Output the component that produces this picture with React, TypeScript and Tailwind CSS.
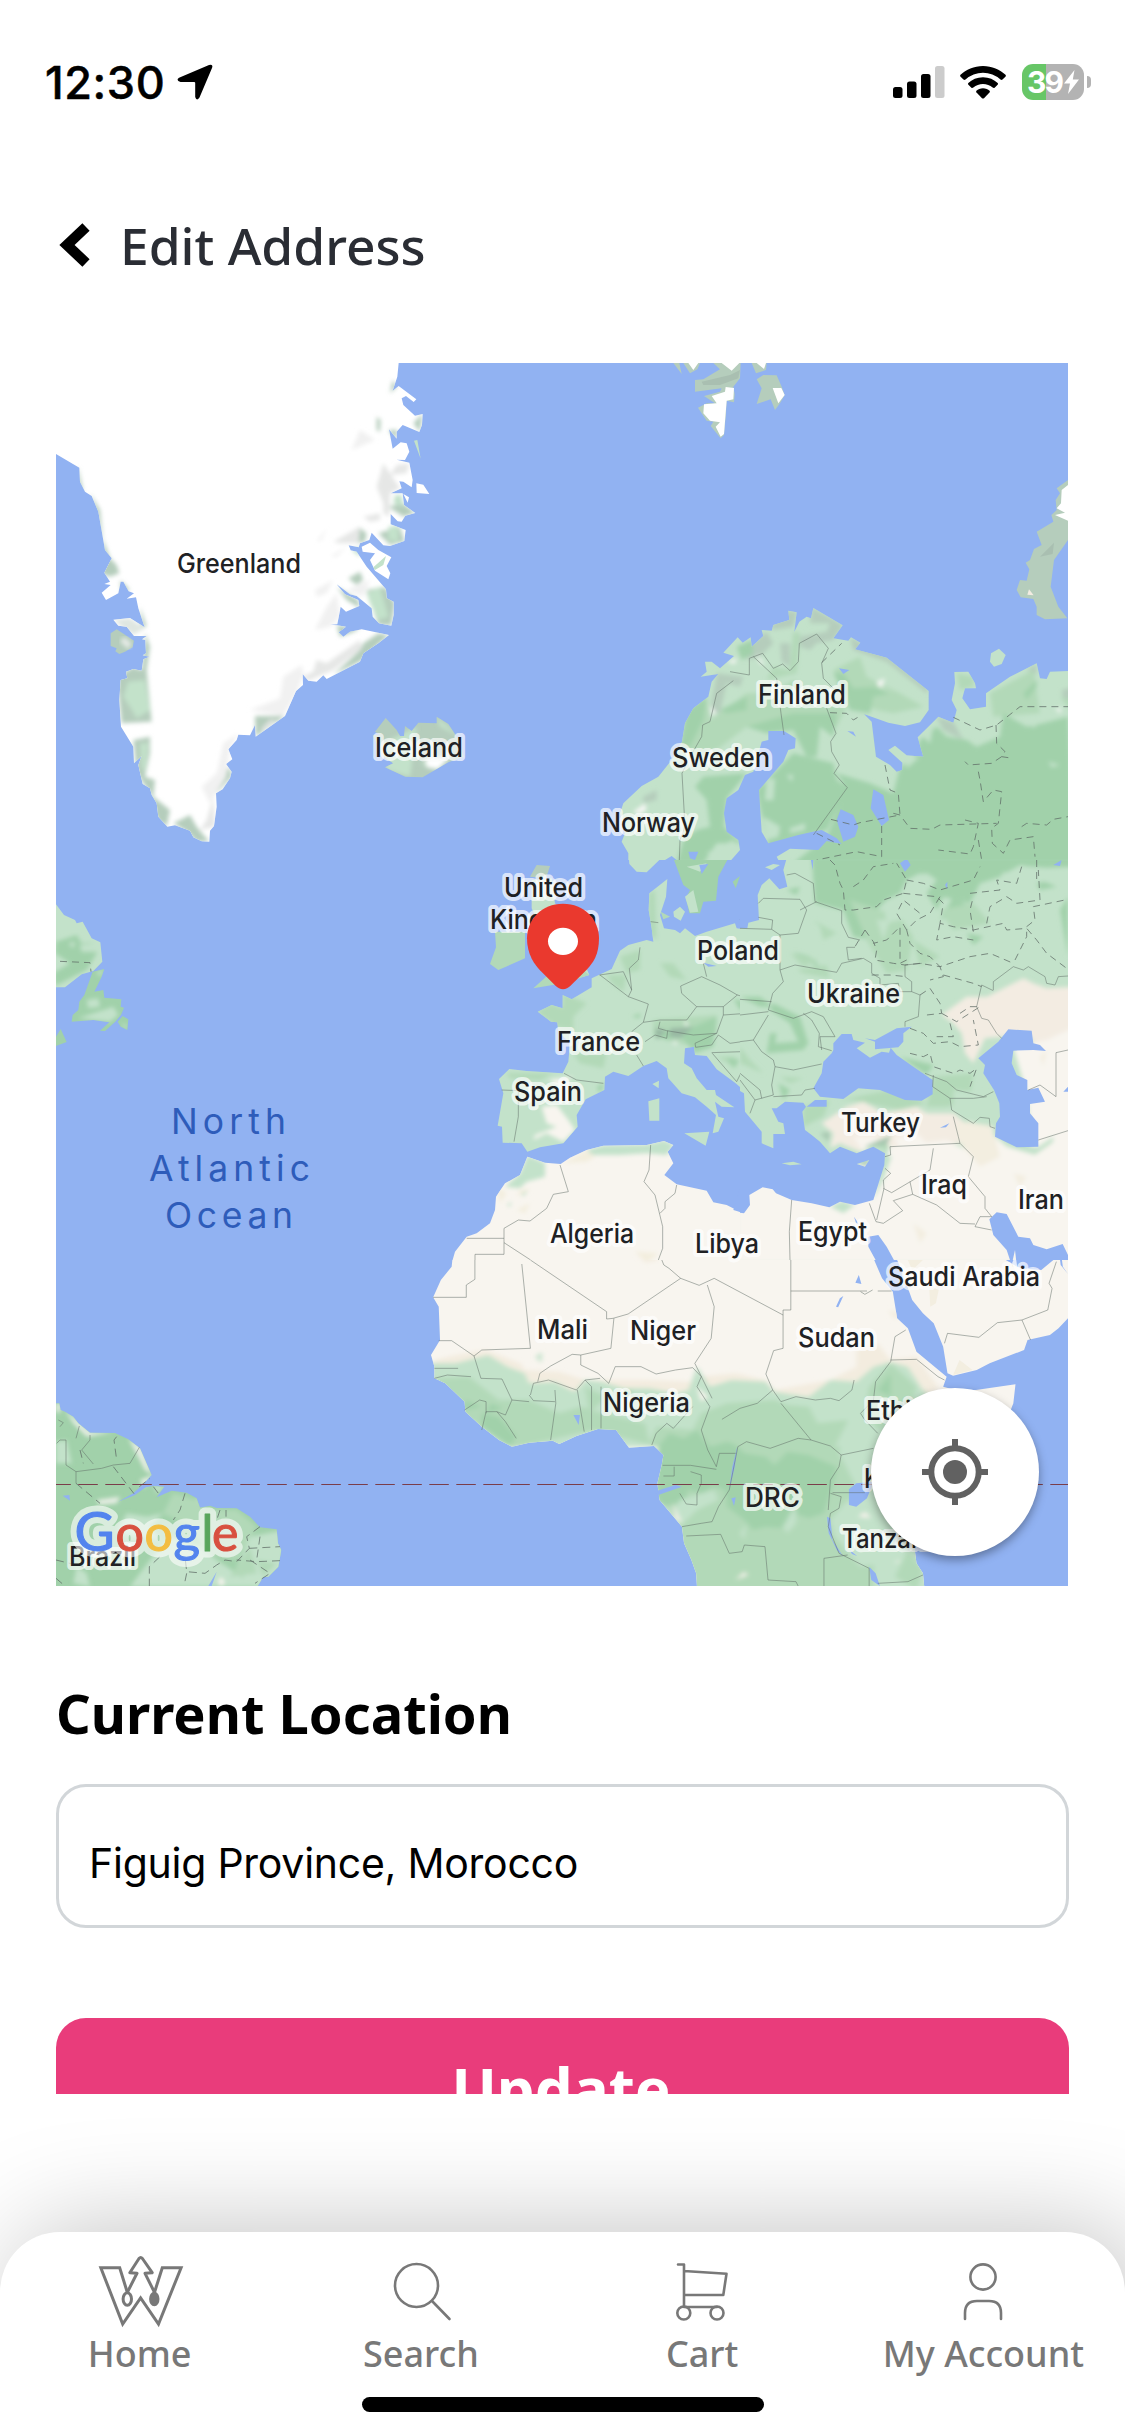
import React from "react";

const WATER = "#91b2f2";
const LIGHT = "#c3e2ca";
const MID = "#b2d9b8";
const DARK = "#a1d1aa";
const TUNDRA = "#b5cdbc";
const SAND = "#f8f5ef";
const TAN = "#f3ece2";

type TileProps = {
  x: number;
  y: number;
  w: number;
  h: number;
  box: string;
  children: React.ReactNode;
};

function Tile({ x, y, w, h, box, children }: TileProps) {
  return (
    <svg x={x} y={y} width={w} height={h} viewBox={box} preserveAspectRatio="none" overflow="hidden">
      {children}
    </svg>
  );
}

/* A land mass whose relief shading is softened and clipped to the coast. */
function Land({ id, d, fill, children }: { id: string; d: string; fill: string; children?: React.ReactNode }) {
  return (
    <g>
      <clipPath id={id}>
        <path d={d} />
      </clipPath>
      <path d={d} fill={fill} />
      <g clipPath={`url(#${id})`}>
        <g filter="url(#relief)">{children}</g>
      </g>
    </g>
  );
}

function Borders({ d, dash }: { d: string; dash?: string }) {
  return (
    <path
      d={d}
      fill="none"
      stroke="#5f6b66"
      strokeOpacity={dash ? 0.75 : 0.5}
      strokeWidth={1}
      strokeDasharray={dash}
      vectorEffect="non-scaling-stroke"
    />
  );
}

function Greenland() {
  return (
    <Tile x={50} y={360} w={510} h={500} box="0 0 1530 1500">
      <Land
        id="greenland"
        fill="#ffffff"
        d="M18 9L1046 9L1042 50L1028 92L1046 78L1099 118L1091 126L1068 108L1055 115L1060 135L1095 167L1118 162L1116 195L1108 216L1058 195L1040 215L1040 236L1017 208L1028 266L1052 247L1070 250L1078 275L1065 300L1040 299L1078 308L1088 360L1085 382L1060 365L1048 364L1055 385L1022 400L1058 400L1062 435L1096 459L1066 467L1055 485L1043 484L1022 462L1022 493L1067 510L1063 543L1020 558L1000 556L965 518L958 540L930 550L926 562L896 556L902 571L920 575L950 620L1008 688L1010 715L1031 725L1031 765L1024 797L987 790L968 770L965 745L920 708L900 703L860 673L885 703L925 720L928 738L888 755L872 740L862 793L838 794L862 796L888 800L866 817L880 830L900 815L935 808L1017 825L985 850L940 880L930 905L830 957L820 946L800 965L775 962L758 942L759 975L738 993L705 1068L617 1130L615 1095L600 1126L565 1124L560 1140L535 1168L547 1198L528 1212L545 1235L540 1255L518 1288L498 1300L500 1340L492 1398L480 1412L478 1445L455 1444L430 1432L420 1412L375 1396L352 1400L325 1370L320 1330L305 1305L300 1285L278 1272L265 1215L275 1188L252 1210L250 1160L213 1100L208 1020L212 960L232 955L228 935L250 927L275 932L280 898L298 890L278 886L288 880L286 840L276 838L290 828L252 828L230 800L205 797L190 779L240 774L284 802L265 745L258 712L230 716L252 700L236 694L220 665L212 665L205 700L168 720L155 698L182 675L163 672L180 665L163 638L185 595L165 570L145 455L125 408L105 395L90 365L88 323L18 282Z"
      >
        <path fill={TUNDRA} d="M85 320L100 400L82 380ZM120 400L150 450L160 560L140 470ZM160 540L180 595L200 615L208 640L180 650L150 640ZM210 660L240 690L215 700ZM270 740L290 800L275 800ZM286 820L300 860L290 930L305 1085L215 1090L200 950L250 920L275 930ZM250 1140L300 1130L300 1180L285 1250L315 1260L310 1310L360 1350L350 1400L320 1380L300 1300L260 1240ZM370 1390L420 1365L440 1400L478 1445L440 1445L410 1415ZM495 1270L540 1220L545 1250L500 1300ZM615 1068L705 1068L617 1130ZM985 820L1017 825L930 905L850 945L930 870L940 850ZM860 680L925 720L930 745L890 720ZM925 500L950 520L945 545L925 550ZM860 795L930 806L900 820L870 830ZM950 690L1005 680L1035 730L1024 797L985 795ZM895 655L930 635L940 660L920 675ZM1090 190L1118 160L1110 216ZM980 170L992 180L990 215L980 210ZM1015 210L1042 210L1038 240ZM1015 440L1060 430L1096 459L1060 470ZM985 520L1050 500L1064 545L1020 555ZM1028 60L1040 80L1020 100Z" />
        <path fill="#dfe6e1" d="M190 779L240 774L284 805L250 825L215 800Z" />
        <path fill={LIGHT} d="M235 965L285 960L300 1050L260 1075L240 1040L220 1010ZM270 1150L295 1150L285 1240L275 1220ZM950 700L990 680L1015 770L985 780L960 730ZM1015 500L1045 495L1045 545L1015 540ZM1035 405L1055 405L1060 440L1030 430ZM970 610L1010 590L1005 600L970 630ZM905 570L930 560L930 590Z" />
        <path fill="#f1f1f1" d="M905 270L930 210L975 240ZM795 690L850 660L830 700L800 710ZM795 810L830 740L860 700L870 770L840 800ZM890 690L960 660L940 710ZM880 770L930 755L935 775L890 790ZM700 950L755 915L760 940L740 1000L700 1068L600 1050L690 1015ZM455 1280L500 1240L520 1150L565 1120L540 1168L528 1250L498 1300L480 1330ZM800 545L830 505L815 540ZM840 590L890 560L860 590Z" />
        <path fill="#e6e7e6" d="M1000 310L1050 385L1020 400L1018 470L1000 460L1000 430L980 380ZM940 470L990 460L990 480L960 485ZM1040 315L1078 310L1070 340L1020 345ZM850 545L930 500L925 550L870 550ZM800 900L830 910L930 840L935 865L850 930L775 962L755 950L790 935ZM490 1310L495 1400L450 1410L470 1380ZM630 1110L660 1080L680 1080L640 1110Z" />
      </Land>
      <path fill={TUNDRA} d="M182 820L200 808L252 842L248 862L225 875L208 882L196 874L200 865L182 858Z" />
      <path fill="#e4e9e5" d="M210 845L222 830L245 850L235 868Z" filter="url(#relief)" />
      <path fill="#ffffff" d="M1099 370L1120 374L1138 402L1100 399ZM1060 402L1077 412L1073 428ZM935 560L960 548L985 570L1024 592L1010 618L1021 640L1015 658L975 632L960 600L975 580L938 575Z" />
      <path fill={LIGHT} d="M1092 242L1102 240L1112 296ZM970 622L1008 588L1000 615L975 630Z" />
      <Land
        id="iceland"
        fill={TUNDRA}
        d="M975 1115L1007 1074L1040 1110L1050 1128L1062 1128L1065 1098L1085 1113L1105 1088L1160 1090L1160 1070L1195 1092L1220 1130L1242 1190L1195 1207L1118 1252L1066 1250L1005 1222L1030 1210L1000 1190L968 1126L990 1124Z"
      >
        <path fill={LIGHT} d="M1160 1070L1230 1130L1170 1100ZM1000 1150L1100 1100L1080 1250L1010 1230ZM1110 1210L1190 1190L1150 1225Z" />
        <path fill="#ffffff" d="M1125 1195L1200 1190L1165 1228L1130 1222Z" />
      </Land>
    </Tile>
  );
}

function Scandinavia() {
  return (
    <Tile x={560} y={360} w={508} h={500} box="0 0 1524 1500">
      <path fill={TUNDRA} d="M340 9L358 9L365 42ZM370 9L420 9L412 28L390 40ZM405 60L430 58L480 28L460 9L542 9L540 55L520 80L524 102L522 127L500 122L498 160L492 225L482 235L452 198L460 185L440 182L414 143L440 130L465 130L432 108L480 95L485 85L405 95ZM575 9L620 9L618 30L588 40ZM590 58L610 45L650 46L665 80L674 105L660 130L645 150L632 118L590 132L605 85Z" />
      <path fill="#a9bfb1" d="M425 65L510 45L540 30L535 55L480 75L430 75Z" />
      <path fill="#ffffff" d="M385 9L415 9L400 30ZM485 9L538 9L515 32ZM590 9L618 9L612 27ZM638 84L664 84L674 105L655 130ZM432 133L470 130L455 108L495 95L497 81L522 84L520 118L500 122L492 222L482 230L467 200L480 187L450 182L430 160Z" />
      <path fill={TUNDRA} d="M1524 360L1490 385L1500 400L1487 420L1490 450L1474 465L1480 485L1430 515L1445 555L1422 567L1410 600L1397 608L1408 628L1400 662L1380 660L1370 690L1382 712L1420 717L1430 740L1430 765L1455 778L1522 775L1495 740L1472 680L1482 600L1524 540Z" />
      <path fill="#a9bfb1" d="M1482 548L1478 582L1440 590Z" />
      <path fill="#ffffff" d="M1524 375L1505 390L1503 430L1490 445L1515 458L1485 465L1524 482Z" />
      <path fill={TAN} d="M1407 688L1421 706L1402 704Z" />
      <path fill={LIGHT} d="M1293 880L1317 866L1337 885L1325 912L1302 920L1290 905Z" />
      <Land
        id="fenno"
        fill={LIGHT}
        d="M205 1510L205 1480L185 1445L195 1420L180 1360L190 1330L245 1278L295 1250L335 1200L366 1145L375 1090L400 1045L445 1010L455 965L475 942L422 950L440 935L435 905L455 905L480 925L522 888L490 878L533 832L548 848L572 832L575 860L610 828L605 810L635 812L640 795L688 780L685 752L710 757L703 815L718 785L740 770L753 775L760 744L848 796L820 835L865 842L873 832L901 848L885 868L980 893L1106 993L1106 1050L1080 1087L1035 1098L985 1088L905 1060L885 1035L935 1085L948 1190L990 1215L1010 1235L1027 1230L1027 1208L985 1170L1005 1157L1040 1186L1090 1190L1073 1132L1105 1100L1135 1070L1180 1088L1190 1050L1175 1020L1185 970L1183 936L1225 935L1245 970L1248 985L1215 985L1207 1015L1230 1048L1278 1040L1278 1000L1350 950L1430 910L1440 955L1460 957L1470 935L1545 932L1545 1510Z"
      >
        <path fill={TUNDRA} d="M755 740L850 796L820 840L770 850L750 870L720 860L720 830L800 815L810 790L750 790ZM570 850L620 815L640 850L600 890L560 900ZM685 752L712 757L700 800L640 810L630 800ZM870 830L905 850L980 885L1106 985L1100 1000L980 905L880 870ZM470 940L550 950L540 980L500 970L480 1060L450 1060ZM1130 1070L1180 1085L1210 1140L1150 1110ZM250 1310L290 1290L290 1320L250 1330ZM1505 990L1545 980L1545 1020L1510 1020ZM660 850L690 850L690 920L665 905ZM1400 930L1430 910L1430 945Z" />
        <path fill={MID} d="M440 1010L450 1080L560 1000L640 1000L700 960L760 1010L860 1040L830 1100L700 1080L560 1100L470 1170L400 1180L360 1150L380 1060ZM820 930L900 890L920 950L1020 1000L1090 1040L1000 1060L950 1050L860 1010ZM1290 1000L1420 930L1440 1060L1300 1070ZM1500 1010L1540 1020L1540 1060ZM1190 940L1240 950L1240 980L1200 990ZM700 815L720 820L710 940L620 960L640 920L690 930Z" />
        <path fill={DARK} d="M380 1050L440 1010L430 1080L390 1160L360 1160ZM530 860L575 840L580 880L545 900ZM430 1250L560 1240L500 1315L492 1400L545 1450L470 1450L430 1510L350 1510L370 1440L410 1410L450 1400L440 1320L405 1280ZM480 1050L560 1010L560 1050L500 1060ZM560 1100L700 1060L830 1060L820 1130L780 1100L770 1190L740 1190L700 1110L620 1120ZM740 1190L820 1210L830 1260L865 1285L800 1410L625 1460L590 1290L700 1180ZM820 940L850 940L880 985L940 980L990 1000L940 1010L930 1060L870 1050L850 1000ZM1080 1140L1130 1100L1160 1130L1220 1140L1250 1160L1320 1130L1330 1060L1400 1100L1450 1090L1524 1070L1545 1510L700 1510L800 1430L860 1285L830 1240L930 1270L1000 1300L1020 1220L1060 1200ZM1390 1000L1430 960L1430 980L1400 1020Z" />
        <path fill={LIGHT} d="M620 1260L645 1255L640 1320L615 1320ZM610 1370L660 1400L655 1430L620 1440ZM690 1405L735 1390L735 1410L690 1420ZM680 1245L700 1245L695 1265ZM440 1480L520 1440L535 1465L480 1500ZM1090 1130L1120 1095L1110 1150ZM1040 1195L1080 1190L1040 1225ZM1465 1205L1500 1215L1475 1222ZM1400 1065L1460 1060L1420 1105Z" />
        <path fill="#f4f6f3" d="M220 1355L255 1330L260 1350L235 1365ZM500 905L530 895L525 912ZM950 965L975 955L965 985L1000 1000L955 978ZM1485 1045L1505 1045L1500 1060ZM590 880L615 915L600 910ZM450 1035L470 1060L455 1065Z" />
      </Land>
      <path fill={WATER} d="M625 1113L672 1113L707 1135L705 1165L685 1170L670 1205L597 1290L605 1415L625 1450L715 1425L765 1414L785 1410L830 1435L845 1452L800 1443L775 1470L690 1466L650 1490L660 1510L505 1510L540 1470L535 1440L500 1415L492 1360L500 1315L535 1290L555 1245L580 1235L590 1200L605 1145L625 1140ZM830 1380L842 1348L880 1365L895 1400L885 1430L850 1445ZM932 1345L940 1288L970 1305L987 1380L965 1398ZM385 1475L415 1475L405 1500L390 1495ZM837 925L868 930L850 942ZM862 1113L880 1115L888 1130ZM315 1500L335 1488L350 1500Z" />
      <Borders d="M358 1500L360 1440L375 1400L366 1240L385 1200L425 1130L428 1095L450 1085L470 1000L520 962M510 935L568 945L568 895L608 880L640 925L668 912L690 932L715 905L718 850L770 822L805 865L785 910L790 955L820 985M580 890L650 955L663 1060L672 1125M800 1045L828 1120L812 1145L815 1175L838 1215L822 1240L862 1283L760 1425" />
      <Borders dash="7 5" d="M810 1058L860 1060L880 1080L905 1065M785 908L845 850M1180 1072L1260 1110L1310 1095L1380 1040L1524 1040M1308 1095L1310 1150L1335 1175L1325 1190L1345 1193M1325 1190L1295 1210L1225 1215L1215 1205M1255 1235L1260 1260L1270 1325L1300 1290L1325 1295L1315 1390L1295 1405L1297 1450L1330 1480L1350 1440L1420 1430L1425 1490M1000 1360L1020 1365L1050 1405L1115 1408L1140 1395L1310 1390M975 1215L990 1290L1015 1300L1020 1365L900 1388L880 1395L800 1375M965 1398L965 1490L890 1475L770 1500M1215 1380L1255 1390L1240 1460L1230 1482L1135 1470M1385 1400L1400 1390L1460 1395L1480 1378L1524 1370M770 1420L840 1455M1255 1440L1265 1500" />
    </Tile>
  );
}

function Atlantic() {
  return (
    <Tile x={50} y={860} w={390} h={400} box="0 0 1170 1200">
      <Land id="labrador" fill={LIGHT} d="M18 133L42 165L75 180L80 190L98 185L125 235L151 247L157 305L130 333L95 343L45 382L18 382Z">
        <path fill={DARK} d="M18 245L80 225L95 250L130 250L140 280L110 330L50 360L15 378L10 340L60 310L15 280Z" />
        <path fill={LIGHT} d="M55 250L75 245L70 265ZM90 255L145 250L140 275L95 275Z" />
      </Land>
      <Land id="newfoundland" fill={DARK} d="M163 327L155 350L133 395L160 390L163 413L214 418L212 440L222 443L213 465L196 485L165 513L150 512L178 487L130 480L65 485L68 465L85 450L88 425L103 405L128 335ZM203 485L218 468L235 478L232 510L212 500ZM32 507L50 546L18 558L18 530Z">
        <path fill={LIGHT} d="M110 420L145 415L150 440L115 445ZM85 475L130 460L190 440L205 465L180 485ZM140 335L160 330L150 350ZM213 490L230 495L230 510Z" />
      </Land>
      <Borders dash="7 5" d="M30 304L120 308L123 335" />
    </Tile>
  );
}

function WestEurope() {
  return (
    <Tile x={440} y={860} w={300} h={400} box="0 0 900 1200">
      <path fill={DARK} d="M702 0L862 0L835 50L828 122L790 125L780 160L748 160L738 115L750 90L730 75ZM878 65L900 48L887 85Z" />
      <path fill={LIGHT} d="M567 0L658 0L620 37L590 35L568 12ZM700 155L720 140L735 155L722 182L702 170ZM735 110L760 90L775 155L750 158ZM740 20L800 10L780 35Z" />
      <path fill={WATER} d="M778 15L805 12L785 42Z" />
      <path fill={MID} d="M165 215L255 215L255 295L175 330L150 312L168 262ZM662 155L690 170L670 178Z" />
      <path fill={TUNDRA} d="M270 50L290 15L330 18L318 55Z" />
      <path fill={LIGHT} d="M275 60L335 55L345 130L400 180L425 290L448 345L360 370L322 350L300 200L275 145Z" />
      <path fill={MID} d="M280 385L330 340L430 330L448 345L370 370Z" />
      <Land
        id="europe"
        fill={LIGHT}
        d="M628 100L682 57L678 110L660 165L672 205L705 210L720 220L735 205L765 228L800 215L885 190L890 205L910 207L910 690L885 668L830 628L800 588L765 585L762 560L735 565L732 610L755 625L770 655L800 690L825 690L828 705L883 742L845 740L825 725L835 770L852 775L835 815L818 820L828 765L800 740L765 712L725 700L685 655L680 625L650 603L610 618L565 648L520 635L495 650L493 690L437 718L410 765L413 800L370 850L300 862L262 875L245 850L188 848L186 800L173 797L190 700L177 657L208 627L260 633L368 640L385 605L390 550L355 515L352 487L333 485L293 455L335 435L368 445L368 405L395 418L455 382L455 355L515 327L540 272L565 255L620 240L640 245L635 205L626 150Z"
      >
        <path fill={MID} d="M290 455L335 430L368 445L368 400L440 430L400 470L400 510L350 500ZM540 290L600 270L600 330L560 340ZM625 100L645 90L650 240L625 220ZM400 580L500 580L490 625L420 610ZM640 480L830 465L830 520L760 560L640 530ZM830 590L885 590L890 625ZM200 640L340 640L300 660L210 655ZM660 310L700 310L740 360L690 350ZM500 345L560 345L550 395L520 375Z" />
        <path fill={DARK} d="M760 500L830 470L820 560L765 580L720 525L680 540L640 520ZM880 415L950 440L900 450ZM470 680L495 670L480 700ZM575 470L600 460L600 475ZM860 595L900 600L880 625Z" />
        <path fill="#98b8a3" d="M690 505L760 500L720 535L690 530ZM645 505L680 510L650 540Z" />
        <path fill={SAND} d="M305 740L350 735L385 780L405 810L370 845L320 820L280 840L285 825L350 800L320 790ZM325 660L400 650L360 680Z" />
        <path fill="#f4f6f3" d="M730 482L745 490L740 500ZM697 545L715 545L705 555Z" />
      </Land>
      <path fill={LIGHT} d="M733 820L808 815L797 857ZM625 724L658 715L658 782L628 782ZM637 672L657 662L656 685Z" />
      <Land
        id="maghreb"
        fill={SAND}
        d="M35 1210L45 1175L80 1130L110 1120L150 1090L165 1050L168 1010L195 970L240 945L262 890L315 908L362 912L390 893L440 870L490 857L620 855L672 843L700 855L683 875L700 910L673 945L710 973L800 992L820 1027L860 1035L910 1060L910 1210Z"
      >
        <path fill={LIGHT} d="M262 885L315 908L315 950L260 965L240 985L195 980L240 940ZM440 870L490 855L620 853L672 840L705 855L680 885L620 880L540 885L450 885ZM240 995L265 990L250 1010ZM200 1035L215 1025L210 1040Z" />
        <path fill="#f3eede" d="M370 910L440 870L465 890L440 905ZM240 990L275 985L230 1010ZM230 1050L270 1030L255 1060ZM585 1175L655 1180L620 1210ZM170 980L200 1000L180 1030Z" />
      </Land>
      <path fill={WATER} d="M900 980L960 980L925 1005L930 1035L912 1060L880 1050L893 1010Z" />
      <path fill={WATER} d="M790 308L830 318L805 320Z" />
      <Borders d="M478 345L550 335L575 390L565 410L480 345M565 410L625 432L610 487L575 515M610 487L660 480L740 480L770 440L725 400L722 378L785 350L840 375L892 405L850 440L770 440M660 485L655 505L680 512L760 525L830 520L850 465L850 440M850 465L990 455M615 545L645 525L680 535L683 512M590 585L610 618M372 640L410 660L490 670M830 520L765 550L767 562L815 555L835 525L870 550L905 545M815 578L905 575L910 625L890 665L817 580M185 690L235 692L235 770L222 845M600 262L595 300L568 325L575 390M790 310L800 350M632 185L655 188M360 915L385 995L340 1003L320 1045L270 1083L235 1080L192 1105L192 1183L105 1183L105 1200M80 1135L192 1135M192 1148L272 1200M632 855L627 930L612 965L645 1005L668 1100L668 1165L655 1200M710 975L705 1000L675 1025L675 1045L660 1060M892 405L910 410M905 545L910 575M950 120L900 180" />
    </Tile>
  );
}

function EastEurope() {
  return (
    <Tile x={740} y={860} w={328} h={400} box="0 0 984 1200">
      <Land id="east" fill={LIGHT} d="M-10 -10H1010V1210H-10Z">
        <path fill={DARK} d="M215 -10L1010 -10L1010 20L900 25L840 15L780 50L720 70L690 130L610 110L590 150L560 100L590 60L540 40L500 60L480 100L440 120L410 150L400 240L340 230L310 150L225 130ZM960 150L984 110L984 290ZM640 110L690 140L600 180ZM100 430L180 470L205 550L190 570L80 580L90 520L110 520L105 550L175 545L150 490L90 450ZM0 410L60 410L100 440L60 440ZM115 670L150 690L130 720ZM880 50L950 80L900 90ZM160 275L210 290L250 330L215 310ZM480 590L580 615L560 645ZM140 90L180 80L170 105ZM680 220L730 230L700 255Z" />
        <path fill={MID} d="M330 120L480 170L520 230L500 330L440 340L410 290L380 240ZM520 240L600 290L540 320ZM600 150L700 130L750 190L640 210ZM170 330L260 315L270 355L190 340ZM220 180L290 220L250 240L240 200ZM190 320L150 280L235 300ZM0 560L30 600L70 640L0 610ZM580 650L700 640L690 720L620 740L560 740ZM300 720L450 690L560 730L480 750L340 720ZM120 650L190 655L150 670ZM190 740L270 720L250 770L190 800ZM390 850L450 830L440 870ZM840 850L890 880L850 880Z" />
        <path fill={LIGHT} d="M785 40L880 20L980 30L970 60L880 70L790 60ZM520 50L560 40L590 60L550 100L510 90ZM430 130L500 120L520 170L440 190ZM140 45L210 50L200 80ZM410 180L450 180L430 240Z" />
        <path fill={TAN} d="M605 465L680 410L740 410L850 355L880 370L920 385L1005 380L1005 900L870 900L880 540L790 530L735 535L700 610L675 580L665 520L640 490ZM245 790L320 740L370 725L430 760L530 740L560 760L640 760L690 800L760 800L760 850L620 850L450 860L420 840L360 875L300 850L270 865L280 820Z" />
        <path fill={SAND} d="M-10 960L435 905L450 860L620 840L700 880L770 830L840 870L885 885L940 850L1005 800L1005 1210L-10 1210ZM820 560L920 540L1005 500L1005 830L880 870L860 700ZM460 835L530 820L560 850L480 860ZM340 830L420 830L370 875Z" />
        <path fill="#f3eee0" d="M650 790L740 780L765 830L780 890L720 920L660 850ZM520 1090L560 1120L540 1150ZM820 940L860 950L840 980ZM900 590L920 570L910 620Z" />
        <path fill={LIGHT} d="M640 690L740 700L775 740L770 800L700 790L640 760ZM430 880L455 890L430 960L400 1020ZM270 1040L305 1022L345 1035L310 1060ZM765 830L830 860L895 860L940 830L940 845L885 885L800 860ZM60 810L110 820L100 868L65 850Z" />
        <path fill="#a8c8b1" d="M240 820L270 815L265 845ZM370 860L455 825L440 855ZM355 912L388 900L380 920Z" />
      </Land>
      <path fill={WATER} d="M-5 -5L140 -5L130 30L142 80L118 88L88 55L65 75L53 105L57 180L25 188L22 205L-5 205ZM212 -5L220 -5L218 30ZM480 10L500 -5L512 15L495 35ZM615 75L622 65L622 88ZM940 15L965 0L960 18Z" />
      <path fill={LIGHT} d="M75 22L100 12L120 15L95 30Z" />
      <path
        fill={WATER}
        fillRule="evenodd"
        d="M-5 690L12 700L15 755L65 815L65 850L100 865L100 822L135 822L130 790L115 785L95 745L110 745L135 725L190 728L198 740L187 755L195 810L215 825L240 845L270 880L300 860L350 880L400 860L435 880L433 915L400 1020L345 1035L300 1025L268 1042L215 1030L155 1020L108 1000L98 988L68 982L28 1005L30 1035L12 1060L-5 1057ZM125 910L160 905L185 913L150 916ZM350 912L388 900L375 920ZM200 740L225 720L260 720L260 740Z"
      />
      <path fill={WATER} d="M280 570L280 550L305 522L335 522L340 540L375 548L350 565L390 593L425 575L447 578L452 563L470 585L520 620L578 660L578 703L545 722L495 720L420 690L355 685L310 717L240 710L220 685L245 640L250 605L275 580ZM405 545L375 535L405 540L470 505L515 500L490 520L490 545L475 562L405 568ZM600 803L628 790L618 802ZM805 508L875 512L880 550L900 555L918 573L880 570L820 572L815 610L830 645L862 660L862 690L895 683L915 725L870 732L870 760L895 790L895 860L830 862L765 830L768 790L780 770L778 730L762 690L730 640L735 615L715 595L775 545ZM970 695L984 680L984 695ZM385 1130L415 1125L440 1160L470 1215L415 1215L385 1160ZM342 1070L355 1090L350 1095ZM748 1078L770 1057L800 1062L835 1130L870 1135L880 1155L920 1168L968 1152L984 1185L984 1215L830 1215L825 1170L815 1215L800 1170L760 1125Z" />
      <Borders d="M55 130L70 115L180 118L200 150L175 220L120 225M140 45L165 40L220 70L225 125L305 152L305 190L325 232L360 240M180 150L230 125M0 205L95 208L98 180L55 172M95 208L120 225L120 330L165 315L290 337L305 310L370 295L395 310L395 340L420 355L420 375L475 370M120 330L130 365L98 400L85 450L160 475L215 455L250 470L285 530L240 530L245 570M190 460L215 480L238 520L235 560L275 572M0 418L95 425M0 465L85 455M0 545L40 540L85 465M40 540L65 575L100 600L105 620L160 630L245 612M105 620L95 675L100 705L45 720L0 660M100 710L185 705L195 690L225 685M45 720L30 760M475 370L480 395L515 395L540 405L535 470L495 485L495 500M515 395L515 365L495 350L495 315L545 310M320 262L325 300L365 295M320 262L345 262M760 390L760 365L820 320L850 330L865 320L915 350L920 370L945 375L955 350L984 348M725 375L760 392M725 375L710 440L725 475L745 480L770 520L785 535M948 710V578L984 570M948 710L900 675L865 690M895 840L984 812M555 640L620 665L650 690L730 710L760 695M580 645L578 680L630 715L700 715L740 710M630 715L635 750L700 790L720 772L748 775L750 800L765 805M640 770L655 830L660 850L450 860L452 885L435 890M660 850L700 890L685 950L735 1010L735 1045L755 1070L720 1070L705 1100L755 1110M580 865L570 930L455 998L430 985M510 965L518 1003L460 1022L488 1052L430 1090L408 1085L388 1030M518 1003L590 1035L660 1090L705 1092M432 985L430 960L452 940L435 925M410 1080L432 985M155 1020L148 1115L150 1200M0 640L60 690L65 715" />
      <Borders dash="7 5" d="M270 0L285 15L300 70L310 90L315 150L340 150L410 140L430 120L490 100L500 60L470 10M340 80L370 60L400 20L460 10M490 100L590 110L610 130L600 190L640 200L700 210L790 190L800 210L860 205L890 240L920 280L980 325M600 110L570 160L530 180L500 210L510 250L540 280L570 290L600 320L690 290L750 280L820 310M500 210L470 160L490 120L540 160M500 60L550 70L600 90L700 60L720 20M690 100L780 90L770 60L830 70L845 20M740 190L750 140L800 110L830 130L900 120L895 30M825 300L860 230L860 200L885 180L880 140L984 118M375 210L345 260M375 210L400 245L410 270L405 300L460 310L495 315L540 310L600 320L610 350L570 360M395 345L450 345L500 350M540 405L570 385L600 430L605 460L560 465M610 345L700 370L725 380M605 460L650 485L720 440L690 440L660 460M630 490L640 530L590 530M510 505L550 520L580 550L630 545L660 560L715 555L700 480M510 580L550 590L570 580L580 620L640 640L660 630L690 640L710 625L690 680M500 300L480 310L480 200L440 240L400 250M600 190L590 240L640 230L700 240M700 215L690 150L700 110M890 0V60" />
    </Tile>
  );
}

function Africa() {
  return (
    <Tile x={400} y={1260} w={668} h={326} box="0 180 1552 978">
      <path fill={SAND} d="M1110 100L1145 150L1165 210L1190 300L1215 340L1240 370L1262 440L1272 520L1285 527L1340 510L1370 490L1450 450L1458 420L1510 405L1530 385L1552 355L1552 222L1535 195L1532 165L1490 210L1440 205L1405 178L1405 100ZM1552 222L1540 200L1538 180L1552 180Z" />
      <path fill="#f3eee0" d="M1285 525L1300 480L1330 510ZM1180 180L1215 180L1190 210ZM1230 270L1255 250L1245 310L1232 320Z" />
      <path fill="#ffffff" fillOpacity={0.75} d="M1422 190L1430 165L1434 200L1450 205L1430 215Z" />
      <Land
        id="africa"
        fill={SAND}
        d="M122 175L120 200L95 240L77 292L90 320L93 420L72 465L80 500L80 535L105 550L150 605L152 635L190 680L230 720L260 740L300 728L355 722L370 732L410 708L460 687L502 690L532 743L590 738L612 765L608 795L598 850L603 900L655 980L660 1030L677 1080L688 1120L690 1160L1218 1160L1215 1120L1200 1090L1195 1040L1300 900L1380 760L1425 610L1430 553L1338 570L1290 570L1262 560L1270 530L1200 455L1180 385L1155 355L1145 275L1120 235L1100 175Z"
      >
        <path fill="#f3ecdf" d="M80 480L130 465L200 450L280 490L290 510L370 515L430 540L480 540L560 540L690 545L700 530L780 520L850 540L870 570L1000 540L1060 500L1060 450L1110 430L1140 480L1200 470L1250 560L1220 600L900 620L500 590L80 520ZM1135 330L1165 340L1150 360ZM545 155L600 160L600 180L570 188Z" />
        <path fill={LIGHT} d="M70 490L130 490L205 465L250 500L290 520L300 550L360 545L405 575L430 540L470 545L520 565L580 565L640 580L670 570L690 500L720 560L770 540L850 545L870 575L950 590L1000 540L1060 545L1100 500L1140 485L1180 500L1215 570L1440 800L1440 1170L600 1170L600 740L60 740ZM315 470L330 455L328 490Z" />
        <path fill={SAND} d="M690 560L715 590L700 605Z" />
        <path fill={MID} d="M80 535L160 530L230 600L300 600L370 640L420 620L470 640L600 680L680 690L700 640L760 610L870 600L900 615L950 620L970 670L1040 660L1020 760L1060 860L1040 960L1100 1010L1100 1170L680 1170L640 960L590 850L600 740L450 690L260 745L140 640ZM1090 560L1140 490L1200 560L1180 640L1110 690L1080 640ZM1180 1050L1215 1110L1200 1170L1150 1130ZM430 560L480 590L440 640Z" />
        <path fill={DARK} d="M600 740L625 700L660 715L690 690L720 740L760 725L780 735L800 760L850 770L870 795L900 755L950 765L1015 800L1005 860L985 940L950 955L915 940L885 985L850 980L820 990L800 960L760 920L755 870L730 860L700 880L670 870L660 905L620 920L590 900ZM190 640L230 650L270 710L255 740L190 680ZM1110 570L1140 520L1140 590ZM210 610L240 625L200 640ZM500 580L540 570L520 600ZM150 600L190 620L150 630Z" />
        <path fill={LIGHT} d="M650 900L730 870L740 900L690 930L650 980L640 920ZM790 1000L805 970L800 1020ZM880 1030L890 1010ZM920 910L890 980L900 1000L920 970ZM570 670L600 670L580 730ZM1040 900L1100 900L1160 1080L1070 1100L1010 1010L1000 960ZM1100 1100L1160 1080L1150 1130ZM1050 640L1110 690L1060 740L1010 740Z" />
        <path fill="#f6f2ec" d="M1065 950L1080 935L1095 955ZM780 1140L800 1115L808 1125ZM632 905L655 970L640 960ZM1150 1085L1165 1080L1155 1090Z" />
      </Land>
      <path fill={WATER} d="M1058 248L1066 225L1072 252ZM1013 320L1022 295L1030 288L1018 322ZM403 645L418 645L415 675ZM784 738L778 800L765 870L772 800ZM770 895L780 892L776 918ZM590 875L640 855L655 860L600 885ZM1043 868L1060 850L1100 845L1085 895L1060 920L1043 915ZM992 950L1000 955L1005 1020L1030 1070L1015 1050L996 1000ZM1090 1100L1105 1120L1115 1158L1095 1140ZM1045 1050L1062 1068L1050 1062Z" />
      <Borders d="M174 180V238L154 255V292H77M283 192L303 445L190 450L172 468M303 180L480 335V357L495 355L530 342L652 235L625 205L613 195L602 160M652 235L695 256L730 235L890 345M714 255L730 320L723 415L685 490L725 595M497 355L490 445L420 465L400 463L350 498L325 520L320 545M908 180V330H890V445L868 452L850 522L866 570L830 610L790 625L748 658M908 273H1085M1098 270L1080 283L1070 275M1110 273H1142M90 422L120 422L172 468L188 535L237 537L260 600L300 605M420 465V495L460 520L485 550L500 500L560 500L595 522L640 510L680 503L700 530L690 560M303 585L310 550L345 540L410 570L430 540L465 535M360 570L362 610L350 720M300 585L310 602L360 605M412 570L428 695M445 560V690M467 560V685M430 540L445 560M585 735L595 700L620 670L635 685L680 620M690 560L720 620L700 690L715 750L735 800L742 760L780 760M610 796H675L735 808M612 828H637V800M675 815L700 825L700 850L690 880V915L665 912L650 880M866 570L885 605L920 590L965 600L1000 595L1020 602L1050 570L1055 540M885 610L955 720L925 715L860 745L805 725L785 740L765 870L740 920L725 965L700 970L655 980M955 720L1000 738L1025 765L1020 800L1000 840L995 930M1025 765L1100 745M1140 485L1150 410L1175 390M1140 480L1200 478L1250 530L1265 540M1140 485L1105 545L1100 600L1070 640L1080 660L1110 700M1005 878L1080 878M1000 880L1025 890L1020 925L1000 940L995 980L1020 1060L1090 1105V1158M665 1008L745 1003L765 1060L795 1055L800 1035L848 1040L855 1140L920 1145L925 1158M985 1158V1075L1040 1065M1110 1150L1180 1145L1215 1125M1265 430L1272 400L1345 412L1388 368L1445 360L1505 330L1515 265L1508 250L1525 185M1445 360L1465 420M80 505H135M80 535L110 525L165 530M190 690L200 635L225 635L245 665L270 715M150 630L185 600L200 605V640M225 635L245 645L260 600" />
    </Tile>
  );
}

function Brazil() {
  return (
    <Tile x={50} y={1360} w={350} h={226} box="0 0 1050 678">
      <Land
        id="brazil"
        fill={DARK}
        d="M18 130L28 130L32 150L45 155L70 170L85 190L120 218L195 219L235 238L270 265L305 345L268 385L310 378L343 380L320 412L365 392L410 398L440 415L450 443L480 437L500 444L560 445L600 470L630 502L680 508L684 550L694 570L685 620L655 650L640 650L622 680L18 680Z"
      >
        <path fill="#e8eee5" d="M45 150L80 180L120 215L190 216L110 230L70 190ZM235 235L275 262L306 345L285 330ZM18 128L32 130L30 160L18 155ZM270 360L310 345L280 385ZM440 410L455 440L445 450ZM140 420L210 410L200 430L150 435Z" />
        <path fill={LIGHT} d="M18 245L50 240L65 310L18 310ZM310 375L345 380L320 400ZM350 440L410 420L400 450L360 450ZM300 600L360 530L450 560L500 600L560 640L620 680L240 680L270 640ZM600 530L700 510L700 680L600 680L560 620ZM80 620L110 640L120 680L70 670ZM230 460L290 470L340 460L300 500L330 540L200 520Z" />
        <path fill={MID} d="M370 400L440 420L470 450L560 450L620 500L560 600L470 580L420 500L340 460ZM620 600L680 610L640 650ZM540 650L600 560L620 640Z" />
        <path fill={SAND} d="M505 660L515 652L525 670L510 680Z" />
      </Land>
      <path fill={WATER} d="M205 425L255 405L300 373L280 372L250 400ZM38 407L58 405L60 422ZM475 678L500 635L485 678Z" />
      <Borders d="M25 180L40 188L30 200M88 198L78 235M120 225V240L95 270L130 312M20 250L30 240H48V315L78 335L155 325L190 315L240 310L268 262M78 335V370" />
      <Borders dash="8 5" d="M78 370L150 430M190 320L255 405M200 230L192 240L200 300M90 270L100 310M310 380L325 400M405 400L390 450L370 480M510 450L500 480M528 450V470M630 500L590 530L598 565L560 605L525 600L500 615L465 640L410 635L405 590M410 640L402 678M598 565L690 560M690 602L620 605L560 600M600 600L660 640L615 670M298 680V620L330 590M18 600L100 620M630 530L620 600M18 655L45 678M268 380L300 355" />
    </Tile>
  );
}

const LABELS: [string, number, number, number][] = [
  ["Greenland", 177, 301, 573],
  ["Iceland", 375, 463, 757],
  ["Finland", 758, 846, 704],
  ["Sweden", 672, 770, 767],
  ["Norway", 602, 695, 832],
  ["United", 504, 583, 897],
  ["Kingdom", 490, 597, 929],
  ["Poland", 697, 779, 960],
  ["Ukraine", 807, 900, 1003],
  ["France", 557, 640, 1051],
  ["Spain", 514, 582, 1101],
  ["Turkey", 841, 920, 1132],
  ["Iraq", 921, 967, 1194],
  ["Iran", 1018, 1064, 1209],
  ["Algeria", 550, 634, 1243],
  ["Libya", 695, 759, 1253],
  ["Egypt", 798, 867, 1241],
  ["Saudi Arabia", 888, 1040, 1286],
  ["Mali", 537, 588, 1339],
  ["Niger", 630, 696, 1340],
  ["Sudan", 798, 875, 1347],
  ["Nigeria", 603, 690, 1412],
  ["Ethiopia", 866, 963, 1420],
  ["Kenya", 864, 934, 1488],
  ["DRC", 745, 800, 1507],
  ["Tanzania", 842, 945, 1548],
  ["Brazil", 69, 136, 1566],
];

const OCEAN: [string, number, number, number][] = [
  ["North", 171, 282, 1134],
  ["Atlantic", 149, 306, 1181],
  ["Ocean", 165, 289, 1228],
];

const LOGO: [string, number, string, number][] = [
  ["G", 74.5, "#5384ee", 55],
  ["o", 115.6, "#d8503f", 50],
  ["o", 144.4, "#f3bd42", 50],
  ["g", 173.4, "#5384ee", 51],
  ["l", 201.6, "#58a55c", 50],
  ["e", 212, "#d8503f", 50],
];

function MapView() {
  return (
    <div className="relative h-[1223px] w-[1012px] overflow-hidden">
      <svg className="block h-full w-full" viewBox="56 363 1012 1223">
        <defs>
          <filter id="relief" x="-5%" y="-5%" width="110%" height="110%">
            <feGaussianBlur stdDeviation="6" />
          </filter>
        </defs>
        <rect x={56} y={363} width={1012} height={1223} fill={WATER} />
        <Greenland />
        <Scandinavia />
        <Atlantic />
        <WestEurope />
        <EastEurope />
        <Africa />
        <Brazil />
        <path d="M51.3 1484.5H1068" stroke="#7a3d4a" strokeWidth={1.2} strokeDasharray="19.5 7.5" />
        <g
          className="font-['Inter','Liberation_Sans',sans-serif] text-[26.5px] font-medium"
          fill="#202124"
          stroke="#ffffff"
          strokeOpacity={0.68}
          strokeWidth={8}
          strokeLinejoin="round"
          paintOrder="stroke"
        >
          {LABELS.map(([name, left, right, y]) => (
            <text key={name} x={left} y={y} textLength={right - left} lengthAdjust="spacingAndGlyphs">
              {name}
            </text>
          ))}
        </g>
        <g className="font-['Inter','Liberation_Sans',sans-serif] text-[35.5px]" fill="#2e5cba">
          {OCEAN.map(([name, left, right, y]) => (
            <text key={name} x={left} y={y} textLength={right - left + 4} lengthAdjust="spacing">
              {name}
            </text>
          ))}
        </g>
        <g className="font-['Lato',sans-serif]" strokeLinejoin="round">
          <g fill="none" stroke="#ffffff" strokeWidth={13} opacity={0.6}>
            {LOGO.map(([c, x, , size], i) => (
              <text key={i} x={x} y={1550.5} fontSize={size}>
                {c}
              </text>
            ))}
          </g>
          {LOGO.map(([c, x, color, size], i) => (
            <text key={i} x={x} y={1550.5} fontSize={size} fill={color} stroke={color} strokeWidth={1.1}>
              {c}
            </text>
          ))}
        </g>
        <g transform="translate(440 860) scale(.33333)">
          <path
            d="M369 131C305 131 261 178 261 235C261 285 285 315 300 331L345 376Q369 400 393 376L440 329C460 309 477 283 477 235C477 178 433 131 369 131Z"
            fill="#ea392e"
          />
          <ellipse cx={369} cy={244} rx={45} ry={41} fill="#fff" />
        </g>
      </svg>
      <button className="absolute top-[1025px] left-[815px] flex size-[168px] items-center justify-center rounded-full bg-white shadow-[0_4px_10px_rgba(0,0,0,0.35)]">
        <svg className="size-[66px]" viewBox="-33 -33 66 66" fill="none" stroke="#616161" strokeWidth={6}>
          <circle r={23.7} />
          <circle r={12} fill="#616161" stroke="none" />
          <path d="M0 -33V-23M0 33V23M-33 0H-23M33 0H23" />
        </svg>
      </button>
    </div>
  );
}

function StatusBar() {
  return (
    <header className="flex h-[164px] items-center justify-between pr-[34px] pl-[45px]">
      <div className="flex items-center gap-[12px]">
        <span className="font-['Inter',sans-serif] text-[45px] leading-none font-medium tracking-[0.6px] text-black [-webkit-text-stroke:0.5px_black]">
          12:30
        </span>
        <svg className="h-[36px] w-[36px]" viewBox="0 0 36 36">
          <path d="M32 1Q36.500 -.5 35 4L22.500 33.500Q19.500 37.500 18.200 33V18.800Q18 18 17.200 18H3.500Q-1.500 16.500 2 13.800Z" fill="#000" />
        </svg>
      </div>
      <div className="flex items-center">
        <svg className="h-[34px] w-[52px]" viewBox="0 0 52 34">
          <rect x={0} y={22} width={9.5} height={11} rx={2.5} />
          <rect x={14} y={16.5} width={9.5} height={16.5} rx={2.5} />
          <rect x={28} y={9} width={9.5} height={24} rx={2.5} />
          <rect x={42} y={1} width={9.5} height={32} rx={2.5} fill="#cccccc" />
        </svg>
        <svg className="ml-[15px] h-[33px] w-[46px]" viewBox="0 0 46 33">
          <path d="M23 0C32 0 40 3.500 45.500 8.800Q46.300 9.800 45.400 10.700L42.500 13.500Q41.500 14.300 40.500 13.400A26 26 0 0 0 5.500 13.400Q4.500 14.300 3.500 13.500L.6 10.700Q-.3 9.800.5 8.800C6 3.500 14 0 23 0Z" />
          <path d="M23 11.200C29 11.200 34 13.500 37.700 16.900Q38.500 17.900 37.600 18.800L34.600 21.700Q33.700 22.400 32.700 21.600A15 15 0 0 0 13.300 21.600Q12.300 22.400 11.400 21.700L8.400 18.800Q7.500 17.900 8.300 16.900C12 13.500 17 11.200 23 11.200Z" />
          <path d="M23 22.300C25.600 22.300 28 23.200 29.600 24.700Q30.300 25.600 29.500 26.500L24 32.200Q23 33 22 32.200L16.500 26.500Q15.700 25.600 16.400 24.700C18 23.200 20.400 22.300 23 22.300Z" />
        </svg>
        <div className="ml-[16px] flex h-[36px] w-[62px] items-center justify-center gap-[2px] rounded-[11px] bg-[linear-gradient(90deg,#67c667_0_39%,#b3b3b3_39%_100%)]">
          <span className="font-['Inter',sans-serif] text-[30px] leading-none font-bold tracking-[-1.8px] text-white">39</span>
          <svg className="h-[24px] w-[15px]" viewBox="0 0 15 24">
            <path d="M10.500 0L0 13.500H6L4 24L15 9.500H8.800Z" fill="#fff" />
          </svg>
        </div>
        <div className="ml-[3px] h-[12px] w-[4px] rounded-r-full bg-[#b3b3b3]" />
      </div>
    </header>
  );
}

const ICON = { fill: "none", stroke: "#787878", strokeWidth: 2.6, strokeLinecap: "round" as const, strokeLinejoin: "round" as const };

function HomeIcon() {
  return (
    <svg className="h-[76px] w-[90px]" viewBox="96 2254 90 76" {...ICON} strokeWidth={3}>
      <path strokeLinecap="butt" strokeLinejoin="miter" d="M127.500 2293L119.700 2267.700H100.800L122.700 2324L140.600 2298L158.500 2324L181.100 2267.700H162.300L154.300 2293" />
      <path d="M127.500 2292L137 2273.300L129.800 2272.700L139 2258.500Q140.700 2256.500 142.400 2258.500L152.200 2272.700L145 2273.300L154.300 2292" />
      <ellipse cx={127.3} cy={2299} rx={4.2} ry={6.3} />
      <ellipse cx={154.3} cy={2299} rx={4.2} ry={6.3} fill="#787878" strokeWidth={2} />
    </svg>
  );
}

function SearchIcon() {
  return (
    <svg className="h-[76px] w-[90px]" viewBox="376.500 2254 90 76" {...ICON}>
      <circle cx={416} cy={2285.5} r={21.5} />
      <path d="M432 2301.500L449 2319" />
    </svg>
  );
}

function CartIcon() {
  return (
    <svg className="h-[76px] w-[90px]" viewBox="658 2254 90 76" {...ICON}>
      <path d="M678 2264.500H684V2307M684 2271L726.500 2273.700L723.300 2295H684M684 2307H717" />
      <circle cx={683.8} cy={2313} r={6.5} />
      <circle cx={717} cy={2313} r={6.5} />
    </svg>
  );
}

function AccountIcon() {
  return (
    <svg className="h-[76px] w-[90px]" viewBox="939 2254 90 76" {...ICON}>
      <circle cx={983} cy={2277} r={12.6} />
      <path d="M965 2319V2313Q965 2301 977 2301H989Q1001 2301 1001 2313V2319" />
    </svg>
  );
}

const TABS = [
  { label: "Home", icon: <HomeIcon /> },
  { label: "Search", icon: <SearchIcon /> },
  { label: "Cart", icon: <CartIcon /> },
  { label: "My Account", icon: <AccountIcon /> },
];

function TabBar() {
  return (
    <nav className="relative flex h-[204px] flex-col items-center rounded-t-[60px] bg-white shadow-[16px_0_110px_rgba(0,0,0,0.25)]">
      <div className="grid w-full grid-cols-4 pt-[22px]">
        {TABS.map((tab) => (
          <div key={tab.label} className="flex flex-col items-center">
            {tab.icon}
            <span className="-ml-[2px] h-[48px] font-['Noto_Sans',sans-serif] text-[36px] leading-[48px] font-medium whitespace-nowrap text-[#787878]">
              {tab.label}
            </span>
          </div>
        ))}
      </div>
      <div className="mt-[19px] h-[15px] w-[402px] rounded-full bg-black" />
    </nav>
  );
}

export default function App() {
  return (
    <div className="flex h-[2436px] w-[1125px] flex-col overflow-hidden bg-white">
      <StatusBar />
      <div className="flex h-[199px] items-start gap-[29px] pt-[46px] pl-[59px]">
        <svg className="mt-[13px] h-[44px] w-[32px]" viewBox="0 0 32 44">
          <path d="M27 4L8 22L27 40" fill="none" stroke="#000" strokeWidth={10.5} />
        </svg>
        <h1 className="font-['Noto_Sans',sans-serif] text-[51.5px] leading-[70px] font-medium text-[#2a2d34]">Edit Address</h1>
      </div>
      <main className="h-[1731px] overflow-hidden px-[56px]">
        <MapView />
        <h2 className="mt-[90px] font-['Noto_Sans',sans-serif] text-[54.2px] leading-[74px] font-bold text-black">Current Location</h2>
        <div className="mt-[34px] flex h-[144px] w-[1013px] items-center rounded-[30px] border-[3px] border-[#d2d6d9] pt-[16px] pl-[30px]">
          <span className="font-['Inter',sans-serif] text-[41px] tracking-[-0.25px] text-black">Figuig Province, Morocco</span>
        </div>
        <button className="mt-[90px] block h-[144px] w-[1013px] rounded-[30px] bg-[#e93c7b] pr-[3px] pb-[4px] font-['Noto_Sans',sans-serif] text-[60px] leading-[80px] font-bold text-white">
          Update
        </button>
      </main>
      <div className="h-[138px]" />
      <TabBar />
    </div>
  );
}
